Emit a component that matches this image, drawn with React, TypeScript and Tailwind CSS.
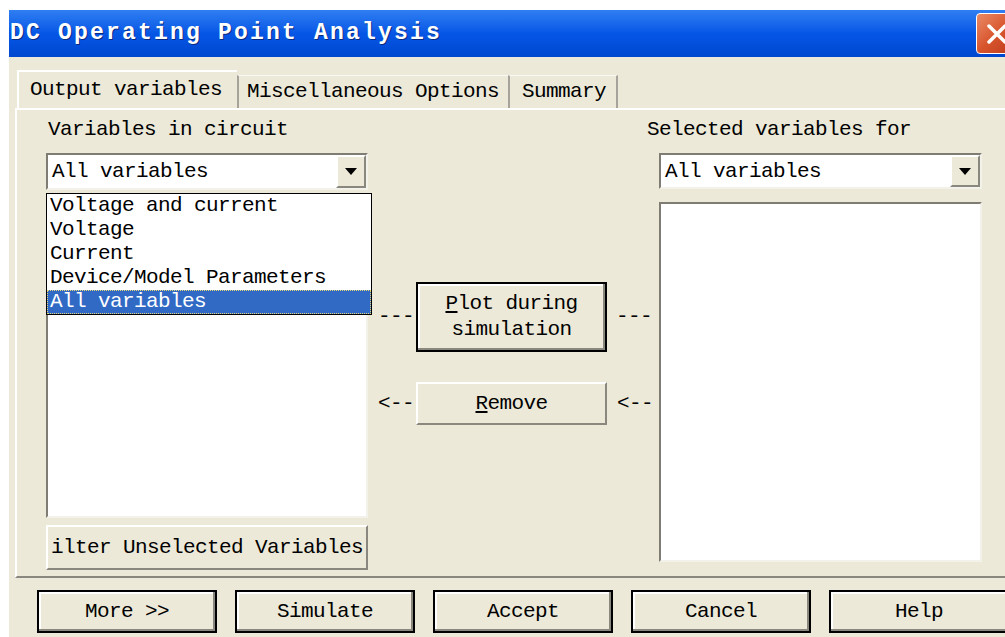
import React from 'react';

const font = "font-['Liberation_Mono',_monospace] text-[21px] tracking-[-0.6px] text-black";

const raised =
  'bg-[#ece9d8] border-t-2 border-l-2 border-t-white border-l-white border-b-2 border-r-2 border-b-[#8a887e] border-r-[#8a887e]';
const sunken =
  'bg-white border-t-2 border-l-2 border-t-[#7f7d73] border-l-[#7f7d73] border-b-2 border-r-2 border-b-[#f3f2ea] border-r-[#f3f2ea]';

function ComboBox({ value }: { value: string }) {
  return (
    <div className={`flex h-full items-center ${sunken}`}>
      <span className="flex-1 pl-[4px] leading-none">{value}</span>
      <div className={`flex h-full w-[30px] items-center justify-center ${raised}`}>
        <svg width="12" height="7" viewBox="0 0 12 7">
          <path d="M0 0h12L6 7z" fill="#000" />
        </svg>
      </div>
    </div>
  );
}

function DialogButton({ children, className = '' }: { children: React.ReactNode; className?: string }) {
  return (
    <button
      className={`flex items-center justify-center border-2 border-black bg-[#ece9d8] shadow-[inset_-2px_-2px_0_#8a887e,inset_2px_2px_0_#fff] ${className}`}
    >
      {children}
    </button>
  );
}

const listItems = ['Voltage and current', 'Voltage', 'Current', 'Device/Model Parameters', 'All variables'];

export default function App() {
  return (
    <div className={`relative h-[637px] w-[1005px] overflow-hidden bg-white ${font}`}>
      <div className="ml-[9px] mt-[10px] flex h-[640px] w-[1040px] flex-col bg-[#ece9d8]">
        {/* Title bar */}
        <div className="flex h-[47px] items-center bg-gradient-to-b from-[#2f7ef2] via-[#0656e6] to-[#0047cf]">
          <span className="flex-1 pl-[1px] font-bold text-[23px] tracking-[2.2px] text-white [text-shadow:1px_1px_0_#0a2a80]">
            DC Operating Point Analysis
          </span>
          <div className="mr-[31px] flex h-[41px] w-[42px] items-center justify-center rounded-[4px] border border-white bg-gradient-to-br from-[#e98a66] via-[#d8552c] to-[#b9381a]">
            <svg width="24" height="24" viewBox="0 0 24 24">
              <path d="M4 4L20 20M20 4L4 20" stroke="#fff" strokeWidth="3.5" strokeLinecap="round" />
            </svg>
          </div>
        </div>

        {/* Tabs */}
        <div className="mt-[13px] flex h-[38px] items-end pl-[8px]">
          <div className="flex h-[38px] w-[220px] items-center border-l-2 border-t-2 border-l-white border-t-white bg-[#ece9d8] pl-[11px] pb-[1px]">
            Output variables
          </div>
          <div className="flex h-[33px] w-[271px] items-center border-l-2 border-t border-l-[#a5a39a] border-t-[#faf9f5] pl-[8px]">
            Miscellaneous Options
          </div>
          <div className="flex h-[33px] w-[110px] items-center border-l-2 border-r-2 border-t border-l-[#a5a39a] border-r-[#a5a39a] border-t-[#faf9f5] pl-[12px]">
            Summary
          </div>
        </div>

        {/* Tab page */}
        <div className="ml-[6px] flex w-[1030px] border-b-2 border-l-2 border-t-2 border-b-[#8a887e] border-l-white border-t-white pl-[29px] pt-[8px] pb-[6px]">
          {/* Left column */}
          <div className="flex w-[322px] flex-col">
            <div className="ml-[2px] h-[24px] leading-[24px]">Variables in circuit</div>
            <div className="relative mt-[11px] h-[37px]">
              <ComboBox value="All variables" />
              <div className="absolute left-0 top-[40px] z-10 h-[122px] w-[326px] border border-black bg-white">
                {listItems.map((item) => (
                  <div
                    key={item}
                    className={`h-[24px] pl-[3px] leading-[24px] ${
                      item === 'All variables'
                        ? 'bg-[#316ac5] text-white outline-1 -outline-offset-1 outline-dotted outline-[#e9d77a]'
                        : ''
                    }`}
                  >
                    {item}
                  </div>
                ))}
              </div>
            </div>
            <div className={`mt-[3px] h-[325px] ${sunken}`} />
            <button className={`mt-[7px] h-[45px] overflow-hidden whitespace-nowrap text-left pl-[3px] ${raised}`}>
              ilter Unselected Variables
            </button>
          </div>

          {/* Middle column */}
          <div className="flex w-[291px] flex-col pt-[164px]">
            <div className="flex h-[70px] items-center">
              <span className="w-[48px] pr-[2px] text-right">---</span>
              <DialogButton className="h-[70px] w-[191px] flex-col leading-[26px]">
                <span>
                  <u>P</u>lot during
                </span>
                <span>simulation</span>
              </DialogButton>
              <span className="w-[52px] pl-[9px]">---</span>
            </div>
            <div className="mt-[30px] flex h-[43px] items-center">
              <span className="w-[48px] pr-[2px] text-right">&lt;--</span>
              <button className={`h-[43px] w-[191px] ${raised}`}>
                <u>R</u>emove
              </button>
              <span className="w-[52px] pl-[10px]">&lt;--</span>
            </div>
          </div>

          {/* Right column */}
          <div className="flex w-[323px] flex-col">
            <div className="-ml-[12px] h-[24px] whitespace-nowrap leading-[24px]">Selected variables for</div>
            <div className="mt-[11px] h-[36px]">
              <ComboBox value="All variables" />
            </div>
            <div className={`mt-[13px] h-[360px] ${sunken}`} />
          </div>
        </div>

        {/* Bottom buttons */}
        <div className="mt-[12px] flex gap-[18px] pl-[28px]">
          {['More >>', 'Simulate', 'Accept', 'Cancel', 'Help'].map((label) => (
            <DialogButton key={label} className="h-[43px] w-[180px]">
              {label}
            </DialogButton>
          ))}
        </div>
      </div>
    </div>
  );
}
